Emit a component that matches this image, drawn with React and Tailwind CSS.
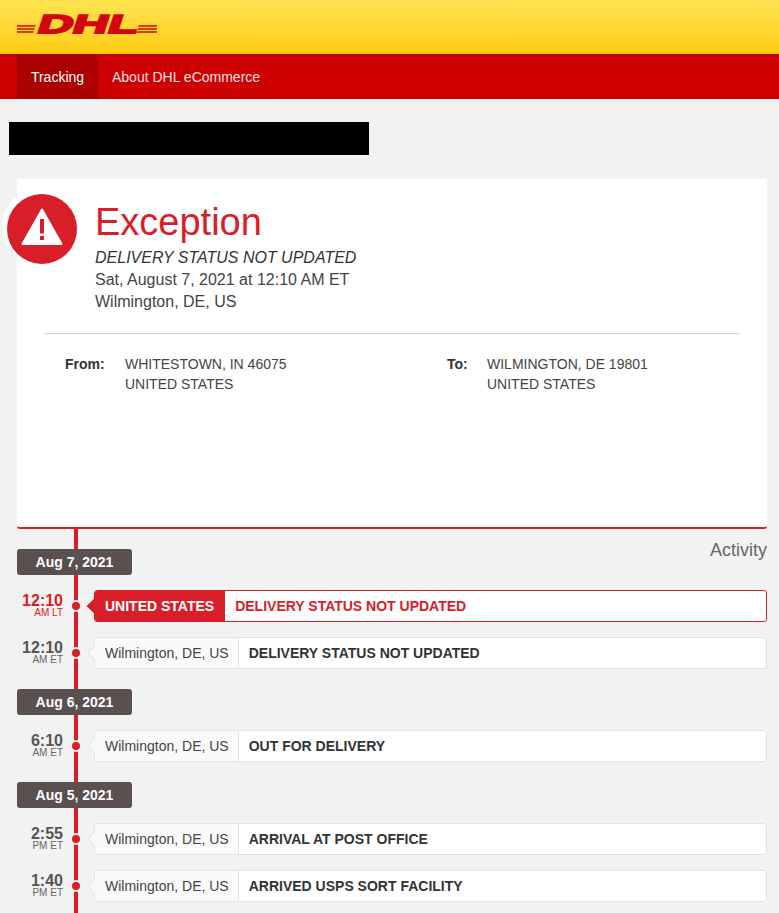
import React from 'react';

const font = { fontFamily: '"Liberation Sans", Arial, sans-serif' };

const days = [
  {
    date: 'Aug 7, 2021',
    rows: [
      { time: '12:10', zone: 'AM LT', place: 'UNITED STATES', status: 'DELIVERY STATUS NOT UPDATED', alert: true },
      { time: '12:10', zone: 'AM ET', place: 'Wilmington, DE, US', status: 'DELIVERY STATUS NOT UPDATED' },
    ],
  },
  {
    date: 'Aug 6, 2021',
    rows: [{ time: '6:10', zone: 'AM ET', place: 'Wilmington, DE, US', status: 'OUT FOR DELIVERY' }],
  },
  {
    date: 'Aug 5, 2021',
    rows: [
      { time: '2:55', zone: 'PM ET', place: 'Wilmington, DE, US', status: 'ARRIVAL AT POST OFFICE' },
      { time: '1:40', zone: 'PM ET', place: 'Wilmington, DE, US', status: 'ARRIVED USPS SORT FACILITY' },
    ],
  },
];

const DhlLogo = () => (
  <svg width="140" height="34" viewBox="0 -7 140 34" className="block">
    <g fill="#de3a0c">
      <polygon points="0,12 19,12 18,14 0,14" />
      <polygon points="0,15 18,15 17,17 0,17" />
      <polygon points="0,18 17,18 16,20 0,20" />
      <polygon points="122,12 140,12 140,14 121,14" />
      <polygon points="121,15 140,15 140,17 120,17" />
      <polygon points="120,18 140,18 140,20 119,20" />
    </g>
    <text
      x="25"
      y="19.5"
      transform="skewX(-18)"
      fill="#d40511"
      stroke="#d40511"
      strokeWidth="1.8"
      fontFamily='"Liberation Sans", Arial, sans-serif'
      fontSize="26"
      fontWeight="700"
      textLength="100"
      lengthAdjust="spacingAndGlyphs"
    >
      DHL
    </text>
  </svg>
);

const Row = ({ row }) => (
  <div className="flex items-center h-8">
    <div className={`w-[46px] text-right ${row.alert ? 'text-[#d81e28]' : 'text-[#555]'}`}>
      <div className="text-base font-bold leading-[14px] mt-[-1px]">{row.time}</div>
      <div className={`text-[10px] leading-[10px] ${row.alert ? 'text-[#d81e28]' : 'text-[#666]'}`}>{row.zone}</div>
    </div>
    <div className="relative z-10 ml-[9px] w-[8px] h-[8px] rounded-full bg-[#d81e28] ring-2 ring-[#f2f2f2] shrink-0" />
    <div
      className={`relative ml-[14px] flex-1 h-8 flex rounded-[3px] border overflow-visible ${
        row.alert ? 'border-[#d81e28] bg-white' : 'border-[#e3e3e3] bg-white'
      }`}
    >
      <div
        className={`absolute left-[-6px] top-[10px] w-[10px] h-[10px] rotate-45 border-l border-b ${
          row.alert ? 'bg-[#d81e28] border-[#d81e28]' : 'bg-[#fafafa] border-[#e3e3e3]'
        }`}
      />
      <div
        className={`relative flex items-center pl-[10px] text-sm rounded-l-[2px] border-r ${
          row.alert
            ? 'pr-[10px] bg-[#d81e28] border-[#d81e28] text-white font-bold'
            : 'pr-[9px] bg-[#fafafa] border-[#e3e3e3] text-[#444]'
        }`}
      >
        {row.place}
      </div>
      <div
        className={`flex items-center px-[10px] text-sm font-bold ${
          row.alert ? 'text-[#d81e28]' : 'text-[#333]'
        }`}
      >
        {row.status}
      </div>
    </div>
  </div>
);

export default function App() {
  return (
    <div className="relative h-[913px] overflow-hidden bg-[#f2f2f2]" style={font}>
      {/* Header */}
      <div className="h-[54px] pl-[17px] pt-[6px] bg-gradient-to-b from-[#ffe34f] to-[#ffcc00]">
        <DhlLogo />
      </div>
      <div className="h-[45px] pl-[17px] flex bg-[#cc0000] text-sm border-t border-[#b80000]">
        <div className="w-[81px] flex items-center justify-center bg-[#aa0000] text-white">Tracking</div>
        <div className="ml-[14px] flex items-center text-[#ffe0e0]">About DHL eCommerce</div>
      </div>

      <div className="ml-[9px] mt-[23px] w-[360px] h-[33px] bg-black" />

      {/* Summary card */}
      <div className="relative ml-[17px] w-[750px] h-[350px] mt-[24px] bg-white rounded-[3px] border-b-2 border-[#d81e28]">
        <div className="absolute left-[-15px] top-[10px] w-[74px] h-[74px] rounded-full bg-white" />
        <div className="absolute left-[-10px] top-[15px] w-[70px] h-[70px] rounded-full bg-[#d81e28] flex items-center justify-center">
          <svg width="42" height="38" viewBox="0 0 42 38" className="mb-[4px]">
            <path
              d="M21 1.5 L40.5 36 H1.5 Z"
              fill="#fff"
              stroke="#fff"
              strokeWidth="2"
              strokeLinejoin="round"
            />
            <rect x="19" y="11" width="4" height="14.5" fill="#d81e28" />
            <rect x="19" y="28" width="4" height="4" fill="#d81e28" />
          </svg>
        </div>

        <div className="pl-[78px] pt-[22px]">
          <div className="text-[38px] leading-[42px] text-[#d81e28]">Exception</div>
          <div className="mt-[4px] text-base leading-[22px] italic text-[#333]">DELIVERY STATUS NOT UPDATED</div>
          <div className="text-base leading-[22px] text-[#444]">Sat, August 7, 2021 at 12:10 AM ET</div>
          <div className="text-base leading-[22px] text-[#444]">Wilmington, DE, US</div>
        </div>

        <div className="mx-[28px] mt-[20px] border-t border-[#ccc]" />

        <div className="flex mt-[20px] text-sm leading-5 text-[#444]">
          <div className="w-[382px] flex">
            <div className="w-[108px] pl-[48px] font-bold text-[#333]">From:</div>
            <div>
              <div>WHITESTOWN, IN 46075</div>
              <div>UNITED STATES</div>
            </div>
          </div>
          <div className="flex">
            <div className="w-[88px] pl-[48px] font-bold text-[#333]">To:</div>
            <div>
              <div>WILMINGTON, DE 19801</div>
              <div>UNITED STATES</div>
            </div>
          </div>
        </div>
      </div>

      {/* Timeline line */}
      <div className="absolute left-[74px] top-[529px] bottom-0 w-[4px] bg-[#d81e28]" />

      <div className="relative ml-[17px] w-[750px] mt-[20px]">
        <div className="absolute right-0 top-[-10px] text-lg leading-[22px] text-[#666]">Activity</div>
        {days.map((day) => (
          <div key={day.date} className="mb-[20px] flex flex-col gap-[15px]">
            <div className="relative z-10 w-[115px] h-[26px] flex items-center justify-center rounded-[3px] bg-[#5a5050] text-white text-sm font-bold">
              {day.date}
            </div>
            {day.rows.map((row, i) => (
              <Row key={i} row={row} />
            ))}
          </div>
        ))}
      </div>
    </div>
  );
}
